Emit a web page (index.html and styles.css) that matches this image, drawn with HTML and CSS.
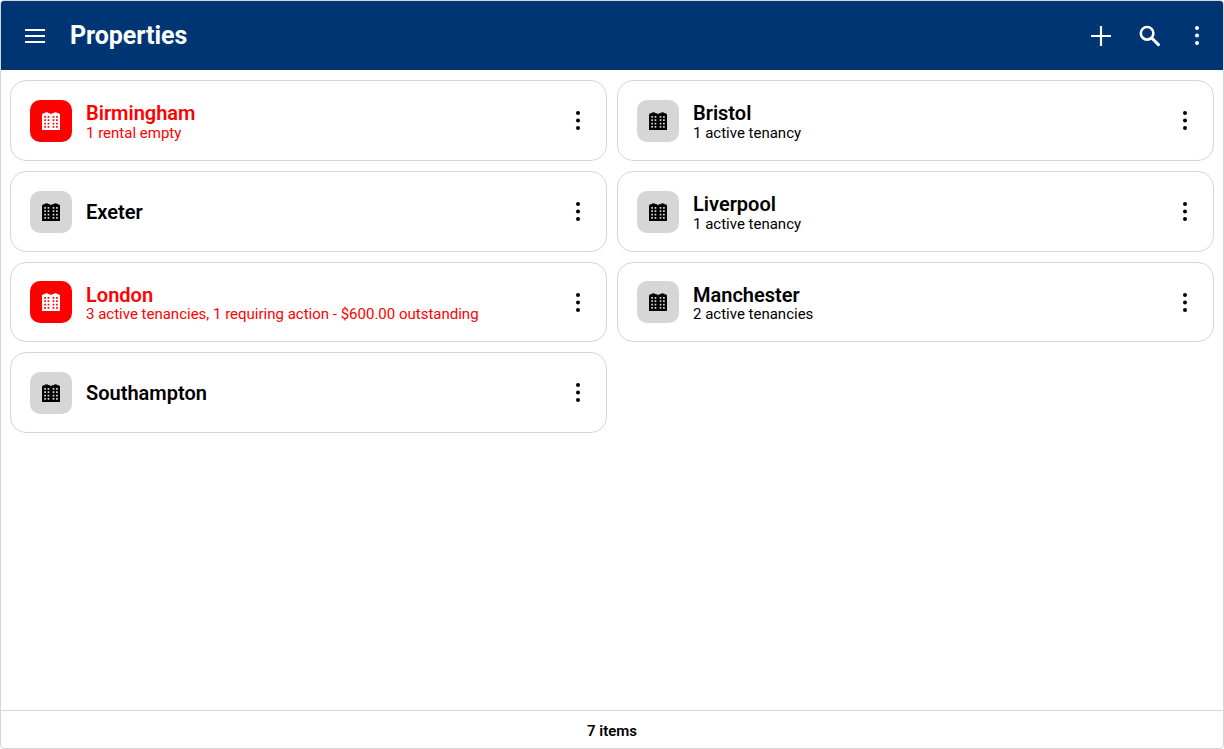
FILE: index.html
```html
<!DOCTYPE html>
<html lang="en">
<head>
<meta charset="utf-8">
<title>Properties</title>
<link rel="stylesheet" href="styles.css">
</head>
<body>
<svg class="defs" width="0" height="0" aria-hidden="true">
  <defs>
    <symbol id="building" viewBox="1 1 16 16">
      <path fill-rule="evenodd" d="M1 17V3.5Q1 2 2.5 2H3Q5 .6 7 2H7.8Q8.6 2 8.8 3H9.2Q9.4 2 10.2 2H11Q13 .6 15 2H15.5Q17 2 17 3.5V17ZM3 4.5V6H4.5V4.5ZM6 4.5V6H7.5V4.5ZM10.5 4.5V6H12V4.5ZM13.5 4.5V6H15V4.5ZM3 7.5V9H4.5V7.5ZM6 7.5V9H7.5V7.5ZM10.5 7.5V9H12V7.5ZM13.5 7.5V9H15V7.5ZM3 10.5V12H4.5V10.5ZM6 10.5V12H7.5V10.5ZM10.5 10.5V12H12V10.5ZM13.5 10.5V12H15V10.5ZM3 13.5V15H4.5V13.5ZM6 13.5V15H7.5V13.5ZM10.5 13.5V15H12V13.5ZM13.5 13.5V15H15V13.5Z"/>
    </symbol>
    <symbol id="kebab" viewBox="0 0 6 21">
      <circle cx="3" cy="3" r="2"/><circle cx="3" cy="10.5" r="2"/><circle cx="3" cy="18" r="2"/>
    </symbol>
  </defs>
</svg>
<div class="app">
  <header class="topbar">
    <button class="icon-btn menu" aria-label="Menu">
      <svg width="20" height="14" viewBox="0 0 20 14"><path d="M0 1H20M0 7H20M0 13H20" stroke="#fff" stroke-width="1.8" fill="none"/></svg>
    </button>
    <h1 class="title">Properties</h1>
    <div class="actions">
      <button class="icon-btn action" aria-label="Add">
        <svg width="22" height="22" viewBox="0 0 22 22"><path d="M11 1V21M1 11H21" stroke="#fff" stroke-width="2.2" fill="none"/></svg>
      </button>
      <button class="icon-btn action" aria-label="Search">
        <svg width="22" height="22" viewBox="0 0 22 22"><circle cx="9.1" cy="8.3" r="6.3" stroke="#fff" stroke-width="2.6" fill="none"/><path d="M14 13.2L20.4 19.6" stroke="#fff" stroke-width="3" stroke-linecap="round"/></svg>
      </button>
      <button class="icon-btn action" aria-label="More">
        <svg class="kebab-light" width="6" height="21"><use href="#kebab"/></svg>
      </button>
    </div>
  </header>
  <main class="grid">
    <article class="card alert">
      <div class="badge"><svg width="18" height="18"><use href="#building"/></svg></div>
      <div class="text"><div class="name">Birmingham</div><div class="sub">1 rental empty</div></div>
      <svg class="kebab" width="6" height="21"><use href="#kebab"/></svg>
    </article>
    <article class="card">
      <div class="badge"><svg width="18" height="18"><use href="#building"/></svg></div>
      <div class="text"><div class="name">Bristol</div><div class="sub">1 active tenancy</div></div>
      <svg class="kebab" width="6" height="21"><use href="#kebab"/></svg>
    </article>
    <article class="card">
      <div class="badge"><svg width="18" height="18"><use href="#building"/></svg></div>
      <div class="text"><div class="name">Exeter</div></div>
      <svg class="kebab" width="6" height="21"><use href="#kebab"/></svg>
    </article>
    <article class="card">
      <div class="badge"><svg width="18" height="18"><use href="#building"/></svg></div>
      <div class="text"><div class="name">Liverpool</div><div class="sub">1 active tenancy</div></div>
      <svg class="kebab" width="6" height="21"><use href="#kebab"/></svg>
    </article>
    <article class="card alert">
      <div class="badge"><svg width="18" height="18"><use href="#building"/></svg></div>
      <div class="text"><div class="name">London</div><div class="sub">3 active tenancies, 1 requiring action - $600.00 outstanding</div></div>
      <svg class="kebab" width="6" height="21"><use href="#kebab"/></svg>
    </article>
    <article class="card">
      <div class="badge"><svg width="18" height="18"><use href="#building"/></svg></div>
      <div class="text"><div class="name">Manchester</div><div class="sub">2 active tenancies</div></div>
      <svg class="kebab" width="6" height="21"><use href="#kebab"/></svg>
    </article>
    <article class="card">
      <div class="badge"><svg width="18" height="18"><use href="#building"/></svg></div>
      <div class="text"><div class="name">Southampton</div></div>
      <svg class="kebab" width="6" height="21"><use href="#kebab"/></svg>
    </article>
  </main>
  <footer class="footer">7 items</footer>
</div>
</body>
</html>
```
FILE: styles.css
```css
* { box-sizing: border-box; }
html, body { margin: 0; height: 100%; background: #fff; }
body { font-family: Roboto, "Liberation Sans", sans-serif; color: #000; overflow: hidden; }
.defs { position: absolute; }
.app {
  height: 749px;
  display: flex;
  flex-direction: column;
  border: 1px solid #d6d6d6;
  border-radius: 4px;
  overflow: hidden;
}
.topbar {
  flex: 0 0 69px;
  background: #003573;
  color: #fff;
  display: flex;
  align-items: center;
  padding: 0 2px 0 24px;
}
.icon-btn {
  background: none;
  border: 0;
  padding: 0;
  display: flex;
  align-items: center;
  justify-content: center;
}
.action { width: 48px; height: 48px; }
.menu { margin-right: 25px; }
.title { margin: 0; font-size: 25px; font-weight: 700; letter-spacing: -0.05px; }
.actions { margin-left: auto; display: flex; align-items: center; fill: #fff; }
.kebab-light { fill: #fff; }
.grid {
  flex: 1;
  display: grid;
  grid-template-columns: 597px 597px;
  grid-auto-rows: 80.67px;
  gap: 10px;
  padding: 10.4px 9px 0;
  align-content: start;
}
.card {
  border: 1px solid #d6d6d6;
  border-radius: 16px;
  display: flex;
  align-items: center;
  padding: 0.3px 25px 0 19px;
}
.badge {
  width: 42px;
  height: 42px;
  flex: none;
  border-radius: 10px;
  background: #d6d6d6;
  display: flex;
  align-items: center;
  justify-content: center;
  fill: #000;
}
.text { flex: 1; margin-left: 14px; min-width: 0; padding-top: 2.5px; }
.name { font-size: 20px; font-weight: 600; line-height: 23.8px; margin-bottom: -2px; }
.name:only-child { margin-top: -1.8px; }
.sub { font-size: 15px; line-height: 18px; }
.kebab { flex: none; fill: #000; }
.alert { color: #ff0000; }
.alert .badge { background: #ff0000; fill: #fff; }
.footer {
  flex: 0 0 38px;
  border-top: 1px solid #d6d6d6;
  display: flex;
  align-items: center;
  justify-content: center;
  padding-top: 2px;
  font-size: 15px;
  font-weight: 600;
}
```
